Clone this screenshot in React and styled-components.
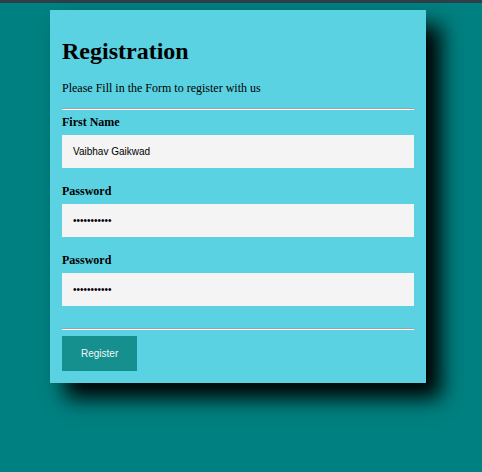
import React from 'react';
import styled, {createGlobalStyle} from 'styled-components';

const GlobalStyle = createGlobalStyle`
  html, body {
    margin: 0;
    padding: 0;
    background: #008080;
    font-family: "Liberation Serif", "Times New Roman", serif;
    font-size: 12px;
    color: #000;
  }
`;

const Page = styled.div`
  min-height: 100vh;
  padding-bottom: 40px;
  box-sizing: border-box;
  display: flow-root;
`;

const TopBar = styled.div`
  height: 3px;
  background: #2e3f47;
`;

const Card = styled.form`
  width: 352px;
  margin: 7px 0 0 50px;
  padding: 12px;
  background: #5ad2e2;
  box-shadow: 15px 15px 20px #000;
  display: flow-root;
`;

const Title = styled.h1`
  font-size: 24px;
  font-weight: bold;
  margin: 16px 0;
`;

const Intro = styled.p`
  margin: 16px 0 12px;
`;

const Divider = styled.hr`
  margin: ${p => (p.$bottom ? '22px 0 6px' : '0 0 6px')};
  border: none;
  border-top: 1px solid #a3a3a3;
  border-bottom: 1px solid #fff;
`;

const Label = styled.label`
  display: block;
  font-weight: bold;
  line-height: 13px;
  margin-bottom: 6px;
`;

const Field = styled.input`
  display: block;
  box-sizing: border-box;
  width: 100%;
  height: 33px;
  margin: 0 0 ${p => (p.$last ? '0' : '17px')};
  padding: 0 11px;
  border: none;
  outline: none;
  background: #f4f4f4;
  font-family: "Liberation Sans", Arial, sans-serif;
  font-size: 10px;
  color: #000;
`;

const Button = styled.button`
  display: block;
  height: 35px;
  padding: 0 19px;
  border: none;
  background: #168f8f;
  color: #eef8f8;
  font-family: "Liberation Sans", Arial, sans-serif;
  font-size: 10px;
  cursor: pointer;
`;

export default function App() {
  return (
    <Page>
      <GlobalStyle />
      <TopBar />
      <Card onSubmit={e => e.preventDefault()}>
        <Title>Registration</Title>
        <Intro>Please Fill in the Form to register with us</Intro>
        <Divider />
        <Label htmlFor="name">First Name</Label>
        <Field id="name" type="text" defaultValue="Vaibhav Gaikwad" />
        <Label htmlFor="pass">Password</Label>
        <Field id="pass" type="password" defaultValue="abcdefghijk" />
        <Label htmlFor="pass2">Password</Label>
        <Field id="pass2" type="password" defaultValue="abcdefghijk" $last />
        <Divider $bottom />
        <Button type="submit">Register</Button>
      </Card>
    </Page>
  );
}
